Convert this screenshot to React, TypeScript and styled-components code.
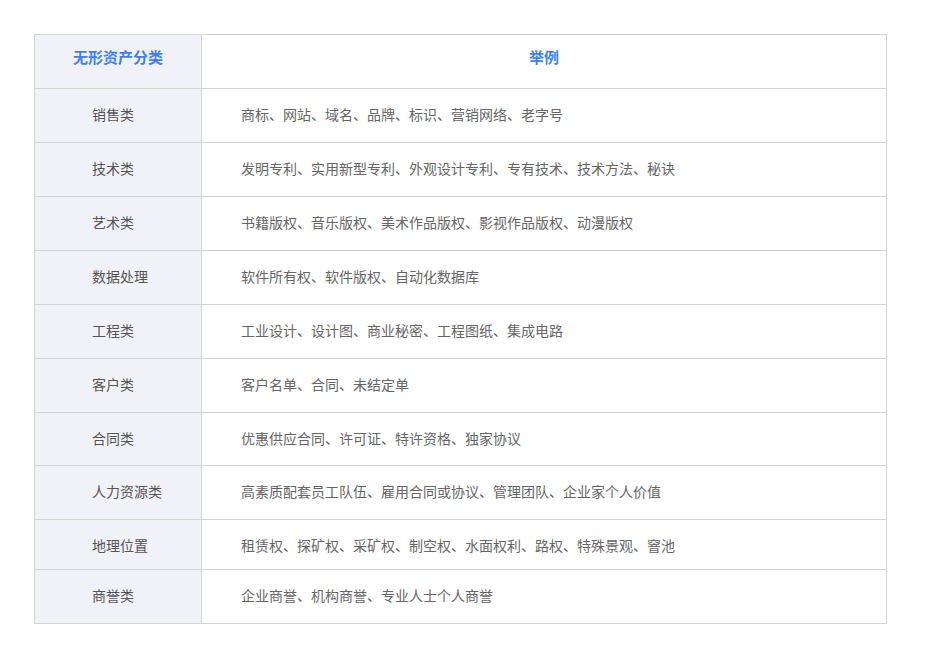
import styled, { createGlobalStyle } from 'styled-components';

const Global = createGlobalStyle`
  body {
    margin: 0;
    background: #fff;
    font-family: "Noto Sans CJK SC", "Liberation Sans", sans-serif;
  }
`;

const Page = styled.div`
  padding: 34px 0 0 34px;
`;

const Table = styled.div`
  width: 852px;
  display: grid;
  grid-template-columns: 167px 1fr;
  border-top: 1px solid #d3d3d3;
  border-left: 1px solid #d3d3d3;
`;

const Cell = styled.div<{ $h: number; $head?: boolean; $label?: boolean }>`
  height: ${p => p.$h}px;
  box-sizing: border-box;
  border-right: 1px solid #d3d3d3;
  border-bottom: 1px solid #d3d3d3;
  background: ${p => (p.$label || p.$head ? '#f1f2f7' : '#fff')};
  display: flex;
  align-items: ${p => (p.$head ? 'center' : 'flex-start')};
  justify-content: ${p => (p.$head ? 'center' : 'flex-start')};
  padding: ${p => (p.$head ? '0 0 10px' : p.$label ? '15px 0 0 57px' : '15px 0 0 39px')};
  font-size: ${p => (p.$head ? '15px' : '14px')};
  font-weight: ${p => (p.$head ? 700 : 400)};
  color: ${p => (p.$head ? '#3d7ff5' : p.$label ? '#555' : '#666')};
  line-height: 20px;
  white-space: nowrap;
`;

const rows: [string, string, number][] = [
  ['销售类', '商标、网站、域名、品牌、标识、营销网络、老字号', 54],
  ['技术类', '发明专利、实用新型专利、外观设计专利、专有技术、技术方法、秘诀', 54],
  ['艺术类', '书籍版权、音乐版权、美术作品版权、影视作品版权、动漫版权', 54],
  ['数据处理', '软件所有权、软件版权、自动化数据库', 54],
  ['工程类', '工业设计、设计图、商业秘密、工程图纸、集成电路', 54],
  ['客户类', '客户名单、合同、未结定单', 54],
  ['合同类', '优惠供应合同、许可证、特许资格、独家协议', 53],
  ['人力资源类', '高素质配套员工队伍、雇用合同或协议、管理团队、企业家个人价值', 54],
  ['地理位置', '租赁权、探矿权、采矿权、制空权、水面权利、路权、特殊景观、窨池', 50],
  ['商誉类', '企业商誉、机构商誉、专业人士个人商誉', 54],
];

export default function App() {
  return (
    <Page>
      <Global />
      <Table>
        <Cell $h={54} $head>无形资产分类</Cell>
        <Cell $h={54} $head style={{ background: '#fff' }}>举例</Cell>
        {rows.map(([k, v, h]) => [
          <Cell key={k} $h={h} $label>{k}</Cell>,
          <Cell key={k + 'v'} $h={h}>{v}</Cell>,
        ])}
      </Table>
    </Page>
  );
}
